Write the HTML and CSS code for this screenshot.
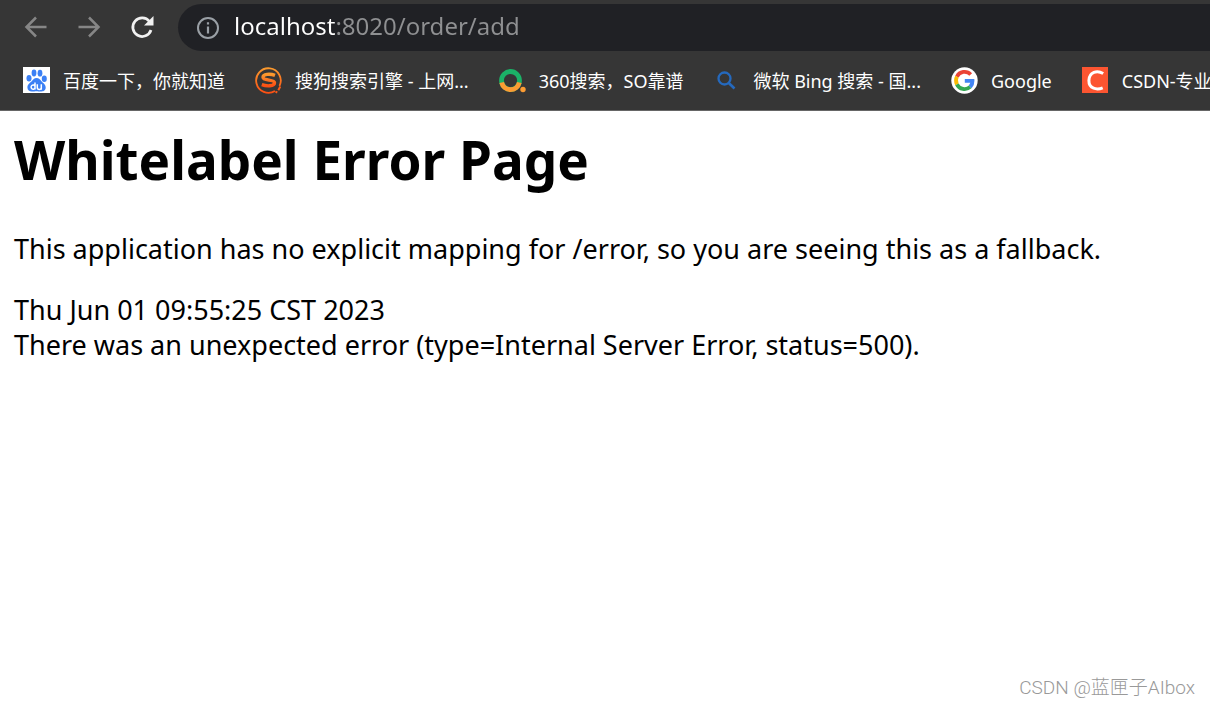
FILE: index.html
```
<!DOCTYPE html>
<html lang="en">
<head>
<meta charset="utf-8">
<title>localhost:8020/order/add</title>
<link rel="stylesheet" href="styles.css">
</head>
<body>
<header class="browser">
  <div class="toolbar">
    <button class="nav-button nav-button--dim" type="button" aria-label="Back">
      <svg viewBox="0 0 26 26" width="26" height="26"><path d="M23.500 12H3.500M13 2.500L3.500 12l9.500 9.500" fill="none" stroke="currentColor" stroke-width="2.500"/></svg>
    </button>
    <button class="nav-button nav-button--dim" type="button" aria-label="Forward">
      <svg viewBox="0 0 26 26" width="26" height="26"><path d="M2.500 12H22.500M13 2.500L22.500 12l-9.500 9.500" fill="none" stroke="currentColor" stroke-width="2.500"/></svg>
    </button>
    <button class="nav-button" type="button" aria-label="Reload">
      <svg viewBox="0 0 26 26" width="26" height="26"><path d="M20.500 6.500A9.300 9.300 0 1 0 22 15" fill="none" stroke="currentColor" stroke-width="2.700"/><path d="M24.500 1v9.500H15z" fill="currentColor"/></svg>
    </button>
    <div class="address">
      <svg class="address-info" viewBox="0 0 24 24" width="24" height="24" aria-hidden="true"><circle cx="12" cy="12" r="10" fill="none" stroke="currentColor" stroke-width="2"/><path d="M12 10.500v7M12 6.200v2.300" stroke="currentColor" stroke-width="2.200"/></svg>
      <input class="address-input" type="text" aria-label="Address" value="localhost:8020/order/add" spellcheck="false">
    </div>
  </div>
  <nav class="bookmarks" aria-label="Bookmarks">
    <a class="bookmark" href="#">
      <svg viewBox="0 0 27 27" width="27" height="27" aria-hidden="true"><path fill="#fff" d="M0 0h27v26H0z"/><g fill="#3b80f5"><ellipse cx="6" cy="11.300" rx="2.500" ry="3.200"/><ellipse cx="11" cy="6" rx="2.400" ry="3.400"/><ellipse cx="17" cy="6.200" rx="2.400" ry="3.400"/><ellipse cx="21.300" cy="11.800" rx="2.500" ry="3.200"/><path d="M13.500 11c2.500 0 3.600 1.700 5 3.300 1.800 2 4.300 3.200 4.200 6.200-.1 3.500-2.700 4-5 4-1.800 0-2.600-.3-4.200-.3-2 0-2.800.4-4.600.3-2.500-.1-4.500-1.200-4.500-4 0-3.300 2.800-4.700 4.500-6.500 1.300-1.400 2.200-3 4.600-3z"/></g><path d="M12 15.500v7M12 19a2.100 2.100 0 1 0 0 2.200M14.300 17.200v3.300c0 2.600 4 2.600 4 0v-3.300M18.300 17.200v5.500" stroke="#fff" stroke-width="1.500" fill="none"/></svg>
      <span>百度一下，你就知道</span>
    </a>
    <a class="bookmark" href="#">
      <svg viewBox="0 0 27 27" width="27" height="27" aria-hidden="true"><defs><linearGradient id="ember" x2="0" y2="1"><stop stop-color="#fb9a2e"/><stop offset="1" stop-color="#fc4f13"/></linearGradient></defs><path d="M20 24A12.300 12.300 0 1 1 24.500 19" fill="none" stroke="url(#ember)" stroke-width="1.800"/><path d="M20 8.400C15 6.500 8 7 8 10.300c0 4 11.500 1.700 11.500 5.500 0 3.900-8.500 3.500-12.700 1.900" fill="none" stroke="url(#ember)" stroke-width="3.400"/><path d="M25.300 19.500l-2 3.700M21.800 24.200l-.8 1.800" stroke="#fc5a17" stroke-width="2"/></svg>
      <span>搜狗搜索引擎 - 上网...</span>
    </a>
    <a class="bookmark" href="#">
      <svg viewBox="0 0 27 27" width="27" height="27" aria-hidden="true"><circle cx="11.500" cy="13.500" r="9" fill="none" stroke="#1bb267" stroke-width="4.800"/><path d="M2.700 15.500a9 9 0 0 0 17.600 0" fill="none" stroke="#fb9c33" stroke-width="4.800"/><circle cx="24" cy="22.500" r="2.700" fill="#fb9c33"/></svg>
      <span>360搜索，SO靠谱</span>
    </a>
    <a class="bookmark" href="#">
      <svg viewBox="0 0 27 27" width="27" height="27" aria-hidden="true"><circle cx="11.500" cy="11.500" r="6" fill="none" stroke="#2569bd" stroke-width="2.300"/><path d="M15.800 16l5.700 5.500" stroke="#2569bd" stroke-width="2.600"/></svg>
      <span>微软 Bing 搜索 - 国...</span>
    </a>
    <a class="bookmark" href="#">
      <svg viewBox="0 0 27 27" width="27" height="27" aria-hidden="true"><circle cx="13.500" cy="13.500" r="13.200" fill="#fff"/><g fill="none" stroke-width="3.800"><path d="M19.700 7.500A8.500 8.500 0 0 0 5.900 9.700" stroke="#ea4335"/><path d="M5.900 9.700a8.500 8.500 0 0 0 0 7.600" stroke="#fbbc05"/><path d="M5.900 17.300a8.500 8.500 0 0 0 13.300 2.600" stroke="#34a853"/><path d="M19.200 19.900A8.500 8.500 0 0 0 21.500 13.800h-7.700" stroke="#4285f4"/></g></svg>
      <span>Google</span>
    </a>
    <a class="bookmark" href="#">
      <svg viewBox="0 0 27 27" width="27" height="27" aria-hidden="true"><path fill="#fc5531" d="M0 0h26v26H0z"/><path d="M21.200 6.500c-6-3.500-14-1.700-14.300 7-.1 8.500 8 9.600 13.800 7.300" fill="none" stroke="#fff" stroke-width="3"/></svg>
      <span>CSDN-专业</span>
    </a>
  </nav>
</header>
<main class="page">
  <h1 class="title">Whitelabel Error Page</h1>
  <p class="text">This application has no explicit mapping for /error, so you are seeing this as a fallback.</p>
  <div class="text">Thu Jun 01 09:55:25 CST 2023</div>
  <div class="text">There was an unexpected error (type=Internal Server Error, status=500).</div>
</main>
<footer class="credit">CSDN @蓝匣子AIbox</footer>
</body>
</html>
```
FILE: styles.css
```
* {
  box-sizing: border-box;
}

body {
  margin: 0;
  min-height: 100vh;
  display: flex;
  flex-direction: column;
  overflow-x: hidden;
  background: #fff;
  color: #000;
  font-family: "Noto Sans", "Noto Sans CJK SC", sans-serif;
}

.browser {
  background: #363636;
  border-bottom: 1px solid #666;
  overflow: hidden;
}

.toolbar {
  display: flex;
  align-items: center;
  gap: 27px;
  padding: 4px 0 0 23px;
}

.nav-button {
  display: flex;
  padding: 0;
  border: 0;
  background: none;
  color: #f1f1f1;
}

.nav-button--dim {
  color: #868686;
}

.address {
  flex: 1;
  display: flex;
  align-items: center;
  gap: 14px;
  height: 47px;
  margin-left: -4px;
  padding-left: 18px;
  border-radius: 24px 0 0 24px;
  background: #202125;
}

.address-info {
  flex: none;
  color: #9aa0a6;
}

.address-input {
  flex: 1;
  min-width: 0;
  padding: 0 0 4px;
  border: 0;
  outline: 0;
  background: linear-gradient(90deg, #fff 101px, #8f9092 101px);
  background-clip: text;
  color: transparent;
  font: 24px/36px "Noto Sans", sans-serif;
}

.bookmarks {
  display: flex;
  align-items: center;
  gap: 30px;
  height: 59px;
  padding-left: 23px;
}

.bookmark {
  flex: none;
  display: flex;
  align-items: center;
  gap: 13px;
  color: #fff;
  font-size: 18px;
  line-height: 28px;
  white-space: nowrap;
  text-decoration: none;
}

.page {
  flex: 1;
  padding: 10px 14px;
}

.title {
  margin: 0 0 32px;
  font-size: 53px;
  line-height: 78px;
}

.text {
  margin: 0;
  font-size: 27px;
  line-height: 35px;
}

p.text {
  margin-bottom: 26px;
}

.credit {
  padding: 0 15px 4px;
  color: #999;
  font-family: Roboto, "Noto Sans CJK SC", sans-serif;
  font-size: 19px;
  font-weight: 300;
  line-height: 28px;
  text-align: right;
}
```
